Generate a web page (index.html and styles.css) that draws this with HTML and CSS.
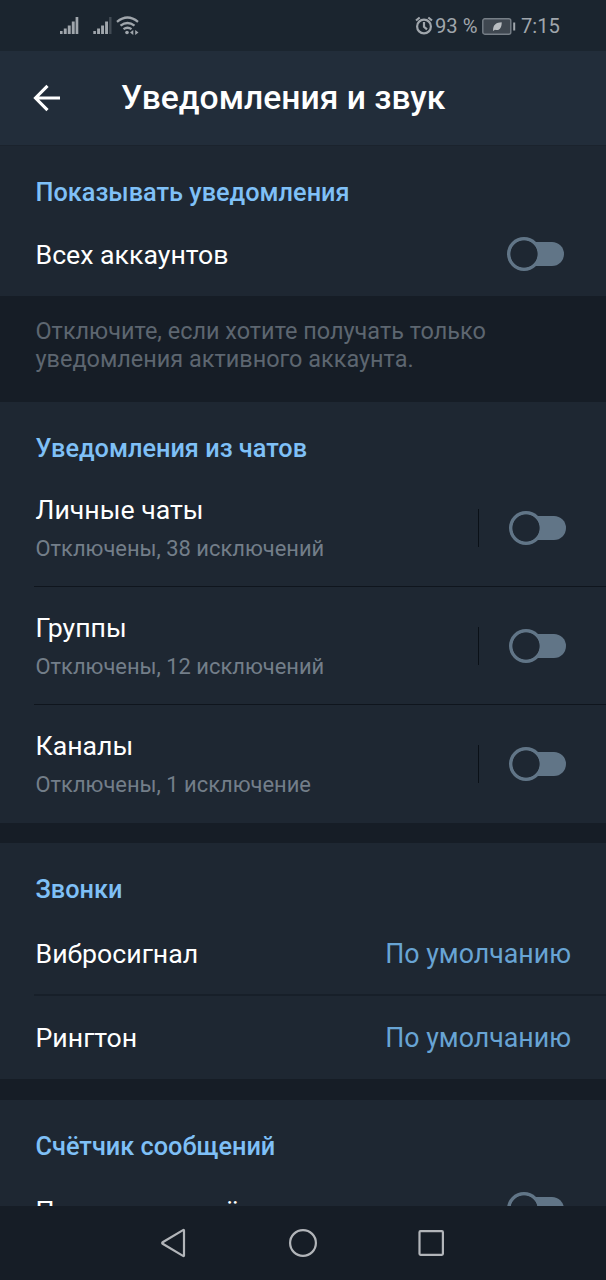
FILE: index.html
```html
<!DOCTYPE html>
<html lang="ru">
<head>
<meta charset="utf-8">
<title>Уведомления и звук</title>
<link rel="stylesheet" href="styles.css">
</head>
<body>
<div class="screen">
  <div class="status">
    <svg class="status-left" width="84" height="24" viewBox="0 0 84 24" fill="#a0a6ac">
      <path d="M0 19h2.600v3H0zM3.800 16.500h2.900v5.500H3.800zM7.800 13.500h2.900v8.500H7.800zM11.800 9.500h2.900v12.500H11.800zM15.600 5h2.700v17h-2.700z"/>
      <path d="M33.300 19h2.600v3h-2.600zM37.100 16.500h2.900v5.500h-2.900zM41.100 13.500h2.900v8.500h-2.900zM45.100 9.500h2.900v12.500h-2.900z"/>
      <path d="M49.100 5h2.400v17h-2.400z" opacity=".3"/>
      <g fill="none" stroke="#a0a6ac" stroke-width="2.300"><path d="M57 9.800q10.500-8.500 21 0M60.500 13.700q7-5.500 14 0M63.500 17.200q4-3 8 0"/></g>
      <circle cx="67" cy="20.500" r="1.800"/><path d="M70 20.500l3.300-2.600v5.200zM78.500 20.500l-3.300-2.600v5.200z"/>
    </svg>
    <div class="status-right">
      <svg class="alarm" width="18" height="19" viewBox="0 0 18 19" fill="none" stroke="#a0a6ac" stroke-width="2.200"><circle cx="9" cy="10.500" r="6.900"/><path d="M9 6v4.800l3 2.500M1 4.500L4.700 1.500M17 4.500L13.300 1.500"/></svg>
      <span class="percent">93 %</span>
      <svg class="battery" width="34" height="17" viewBox="0 0 34 17"><rect x=".8" y=".8" width="28" height="15.400" rx="2" fill="#3f4750" stroke="#777f87" stroke-width="1.400"/><path d="M31.200 4.500h2v8h-2z" fill="#a0a6ac"/><path d="M11 13c0-7 3.500-8.500 8.700-8.800.2 5-2 9-6.700 7.500z" fill="#b9bdc1"/></svg>
      <span class="clock">7:15</span>
    </div>
  </div>
  <header class="appbar">
    <svg class="back" width="28" height="28" viewBox="0 0 28 28" fill="none" stroke="#fff" stroke-width="3.100"><path d="M14.500 1.800L2.500 14 14.500 26.200M2.500 14H27"/></svg>
    <h1 class="title">Уведомления и звук</h1>
  </header>
  <main class="content">
    <section class="section first">
      <h2 class="heading">Показывать уведомления</h2>
      <div class="row"><span class="label">Всех аккаунтов</span><span class="toggle"></span></div>
    </section>
    <p class="info">Отключите, если хотите получать только<br>уведомления активного аккаунта.</p>
    <section class="section chats">
      <h2 class="heading">Уведомления из чатов</h2>
      <div class="chat"><div class="chat-text"><div class="label">Личные чаты</div><div class="sub">Отключены, 38 исключений</div></div><span class="bar"></span><span class="toggle"></span></div>
      <div class="chat"><div class="chat-text"><div class="label">Группы</div><div class="sub">Отключены, 12 исключений</div></div><span class="bar"></span><span class="toggle"></span></div>
      <div class="chat"><div class="chat-text"><div class="label">Каналы</div><div class="sub">Отключены, 1 исключение</div></div><span class="bar"></span><span class="toggle"></span></div>
    </section>
    <section class="section calls">
      <h2 class="heading">Звонки</h2>
      <div class="row ruled"><span class="label">Вибросигнал</span><span class="value">По умолчанию</span></div>
      <div class="row"><span class="label">Рингтон</span><span class="value">По умолчанию</span></div>
    </section>
    <section class="section counter">
      <h2 class="heading">Счётчик сообщений</h2>
      <div class="row"><span class="label">Показывать счётчик</span><span class="toggle"></span></div>
    </section>
  </main>
  <nav class="navbar">
    <svg width="28" height="30" viewBox="0 0 28 30"><path d="M24 2.500v25q0 1-1 .4L2.700 15.800q-1-.8 0-1.600L23 2.100q1-.6 1 .4z"/></svg>
    <svg width="30" height="30" viewBox="0 0 30 30"><circle cx="15" cy="15" r="12.900"/></svg>
    <svg width="28" height="30" viewBox="0 0 28 30"><rect x="1.500" y="3.200" width="23.400" height="23.600" rx="1"/></svg>
  </nav>
</div>
</body>
</html>
```
FILE: styles.css
```css
*, *::before, *::after { box-sizing: border-box; }
body { margin: 0; background: #161d26; font-family: Roboto, sans-serif; color: #fff; }
h1, h2, p { margin: 0; }
.screen { width: 606px; height: 1280px; display: flex; flex-direction: column; overflow: hidden; }
.status { height: 51px; flex: none; background: #1b252f; display: flex; align-items: center; justify-content: space-between; padding: 0 47px 0 60px; color: #a0a6ac; font-size: 20.2px; white-space: nowrap; }
.status-left { margin-bottom: 3px; }
.status-right { display: flex; align-items: center; height: 51px; padding-top: 1px; }
.alarm { margin: 0 2px 2px 0; }
.percent { width: 47px; }
.battery { margin-right: 5px; }
.clock { width: 38px; }
.appbar { height: 95px; flex: none; background: #222d3a; border-bottom: 1px solid #1b232d; display: flex; align-items: center; padding-left: 33px; }
.back { flex: none; margin-right: 60px; }
.title { font-size: 33.65px; font-weight: 500; line-height: 40px; white-space: nowrap; }
.content { height: 1060px; flex: none; overflow: hidden; }
.section { background: #1e2732; }
.heading { height: 68px; padding: 13px 0 0 35.5px; font-size: 25.3px; line-height: 68px; font-weight: 500; color: #7fc0f7; white-space: nowrap; }
.row { height: 84px; display: flex; align-items: center; justify-content: space-between; padding: 0 35px 0 35.5px; }
.row .toggle { margin-right: 7px; }
.label { font-size: 26.7px; line-height: 32px; white-space: nowrap; }
.value { font-size: 26.75px; line-height: 32px; color: #68a4d4; white-space: nowrap; }
.row .label, .row .value { padding-top: 2px; }
.toggle { flex: none; width: 57px; height: 34px; display: flex; align-items: center; }
.toggle::before { content: ""; width: 34px; height: 34px; flex: none; z-index: 1; border-radius: 50%; background: radial-gradient(circle, #1e2732 13.2px, #617587 14px); }
.toggle::after { content: ""; width: 40px; height: 24px; flex: none; margin-left: -17px; background: #617587; border-radius: 12px; }
.first { height: 150px; }
.first .heading { height: 66px; }
.info { height: 106px; padding: 21px 35.5px 0; font-size: 23.45px; line-height: 28px; color: #5d6670; white-space: nowrap; }
.chats { height: 421px; }
.chats .heading { height: 67px; }
.chat { height: 118px; margin-left: 34px; padding: 0 40px 0 1.5px; display: flex; align-items: center; border-bottom: 1px solid #0f151d; }
.chat:last-child { border-bottom-color: transparent; }
.chat-text { flex: 1; padding-top: 1px; }
.sub { margin-top: 10px; font-size: 21.9px; line-height: 26px; color: #737e89; white-space: nowrap; }
.bar { width: 1px; height: 38px; margin-right: 30px; background: #0a1017; }
.calls { height: 236px; margin-top: 20px; }
.ruled { position: relative; }
.ruled::after { content: ""; position: absolute; left: 34px; right: 0; bottom: -1px; height: 2px; background: #171f29; }
.counter { height: 106px; margin-top: 21px; overflow: hidden; }
.counter .heading { height: 67px; }
.counter .row .label { padding-top: 3px; }
.navbar { height: 74px; flex: none; background: #161d26; display: flex; justify-content: center; align-items: center; gap: 100px; }
.navbar svg { fill: none; stroke: #b2b5b9; stroke-width: 2.2px; }
```
